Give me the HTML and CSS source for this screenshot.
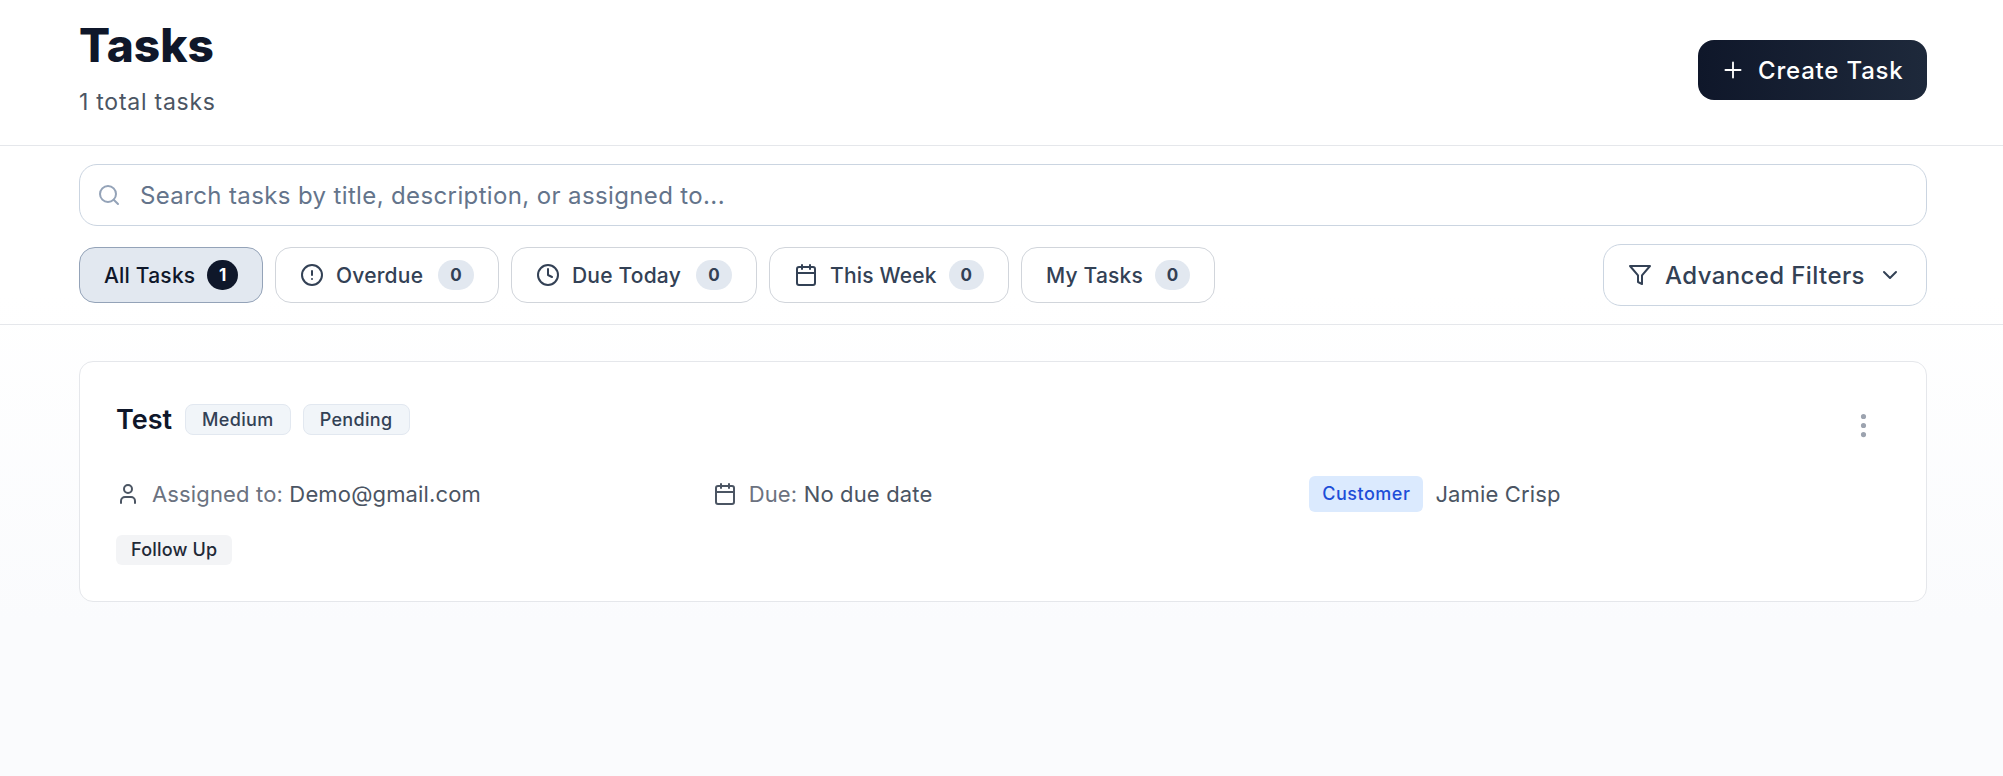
FILE: index.html
```html
<!DOCTYPE html>
<html>
<head>
	<title>Tasks</title>
	<meta charset="utf-8">
	<link rel="stylesheet" href="styles.css">
</head>
<body>
<div class="page-header">
	<div>
		<h1 class="page-title">Tasks</h1>
		<p class="page-sub">1 total tasks</p>
	</div>
	<button type="button" class="btn-create">
		<svg class="icon" viewBox="0 0 24 24"><path d="M5 12h14"/><path d="M12 5v14"/></svg>
		Create Task
	</button>
</div>

<div class="toolbar">
	<div class="search">
		<svg class="icon search-icon" viewBox="0 0 24 24"><circle cx="11" cy="11" r="8"/><path d="m21 21-4.3-4.3"/></svg>
		<input type="text" class="search-input" placeholder="Search tasks by title, description, or assigned to...">
	</div>
	<div class="filter-row">
		<div class="tabs">
			<button type="button" class="tab tab-active tab-all">All Tasks <span class="count">1</span></button>
			<button type="button" class="tab tab-overdue">
				<svg class="icon" viewBox="0 0 24 24"><circle cx="12" cy="12" r="10"/><path d="M12 8v4"/><path d="M12 16h.01"/></svg>
				Overdue <span class="count">0</span>
			</button>
			<button type="button" class="tab tab-today">
				<svg class="icon" viewBox="0 0 24 24"><circle cx="12" cy="12" r="10"/><path d="M12 6v6l4 2"/></svg>
				Due Today <span class="count">0</span>
			</button>
			<button type="button" class="tab tab-week">
				<svg class="icon" viewBox="0 0 24 24"><path d="M8 2v4"/><path d="M16 2v4"/><rect x="3" y="4" width="18" height="18" rx="2"/><path d="M3 10h18"/></svg>
				This Week <span class="count">0</span>
			</button>
			<button type="button" class="tab tab-mine">My Tasks <span class="count">0</span></button>
		</div>
		<button type="button" class="btn-filters">
			<svg class="icon" viewBox="0 0 24 24"><path d="M22 3H2l8 9.46V19l4 2v-8.54L22 3z"/></svg>
			Advanced Filters
			<svg class="icon" viewBox="0 0 24 24"><path d="m6 9 6 6 6-6"/></svg>
		</button>
	</div>
</div>

<div class="task-list">
	<div class="task-card">
		<div class="task-top">
			<div class="task-head">
				<span class="task-title">Test</span>
				<span class="badge">Medium</span>
				<span class="badge">Pending</span>
			</div>
			<button type="button" class="btn-more">
				<svg class="icon" viewBox="0 0 24 24"><circle cx="12" cy="5" r="1"/><circle cx="12" cy="12" r="1"/><circle cx="12" cy="19" r="1"/></svg>
			</button>
		</div>
		<div class="task-meta">
			<div class="meta-item">
				<svg class="icon" viewBox="0 0 24 24"><path d="M19 21v-2a4 4 0 0 0-4-4H9a4 4 0 0 0-4 4v2"/><circle cx="12" cy="7" r="4"/></svg>
				<span><span class="meta-label">Assigned to:</span> Demo@gmail.com</span>
			</div>
			<div class="meta-item">
				<svg class="icon" viewBox="0 0 24 24"><path d="M8 2v4"/><path d="M16 2v4"/><rect x="3" y="4" width="18" height="18" rx="2"/><path d="M3 10h18"/></svg>
				<span><span class="meta-label">Due:</span> No due date</span>
			</div>
			<div class="meta-item">
				<span class="customer-tag">Customer</span>
				<span>Jamie Crisp</span>
			</div>
		</div>
		<div class="task-tags">
			<span class="tag">Follow Up</span>
		</div>
	</div>
</div>
</body>
</html>
```

FILE: styles.css
```css
* {
	box-sizing: border-box;
}

body {
	margin: 0;
	min-height: 776px;
	font-family: "Inter", "Liberation Sans", sans-serif;
	background: linear-gradient(#ffffff 38%, #fafbfd 80%);
	color: #0f172a;
}

button {
	font-family: inherit;
	cursor: pointer;
}

.icon {
	width: 24px;
	height: 24px;
	fill: none;
	stroke: currentColor;
	stroke-width: 2;
	stroke-linecap: round;
	stroke-linejoin: round;
	flex: none;
}

.page-header {
	display: flex;
	justify-content: space-between;
	align-items: flex-start;
	height: 146px;
	padding: 20px 76px 0 79px;
	border-bottom: 1px solid #e5e7eb;
	background: #fff;
}

.page-title {
	margin: 0;
	font-size: 46px;
	line-height: 50px;
	font-weight: 800;
}

.page-sub {
	margin: 17px 0 0;
	font-size: 23px;
	line-height: 30px;
	letter-spacing: 0.75px;
	color: #4b5563;
}

.btn-create {
	display: flex;
	align-items: center;
	gap: 12px;
	width: 229px;
	height: 60px;
	margin-top: 20px;
	padding: 0 0 0 22px;
	border: 0;
	border-radius: 16px;
	background: linear-gradient(90deg, #0f172a, #1e293b);
	color: #fff;
	font-size: 24px;
	font-weight: 500;
	letter-spacing: 0.8px;
}

.btn-create .icon {
	width: 26px;
	height: 26px;
	stroke-width: 1.7;
}

.toolbar {
	padding: 18px 76px 18px 79px;
	border-bottom: 1px solid #e5e7eb;
}

.search {
	display: flex;
	align-items: center;
	gap: 19px;
	height: 62px;
	padding: 0 17px;
	border: 1px solid #cbd5e1;
	border-radius: 18px;
	background: #fff;
}

.search-icon {
	color: #94a3b8;
}

.search-input {
	flex: 1;
	padding: 0;
	border: 0;
	outline: 0;
	background: transparent;
	font-family: inherit;
	font-size: 24px;
	letter-spacing: 0.37px;
}

.search-input::placeholder {
	color: #64748b;
	opacity: 1;
}

.filter-row {
	display: flex;
	justify-content: space-between;
	align-items: center;
	margin-top: 18px;
}

.tabs {
	display: flex;
	gap: 12px;
}

.tab {
	display: flex;
	align-items: center;
	gap: 12px;
	height: 56px;
	padding: 0 24px;
	border: 1px solid #d1d5db;
	border-radius: 16px;
	background: #fff;
	color: #334155;
	font-size: 21px;
	font-weight: 500;
	letter-spacing: 0.2px;
	white-space: nowrap;
}

.tab-all { width: 184px; }
.tab-overdue { width: 224px; }
.tab-today { width: 246px; }
.tab-week { width: 240px; }
.tab-mine { width: 194px; }

.tab-active {
	background: #e2e8f0;
	border-color: #94a3b8;
	color: #0f172a;
}

.count {
	width: 36px;
	height: 30px;
	margin-left: auto;
	border-radius: 15px;
	background: #e2e8f0;
	font-size: 17px;
	font-weight: 700;
	line-height: 30px;
	text-align: center;
}

.tab-active .count {
	width: 31px;
	background: #0f172a;
	color: #fff;
}

.btn-filters {
	display: flex;
	align-items: center;
	gap: 13px;
	width: 324px;
	height: 62px;
	padding: 0 24px;
	border: 1px solid #cbd5e1;
	border-radius: 18px;
	background: #fff;
	color: #334155;
	font-size: 24px;
	font-weight: 500;
	letter-spacing: 0.4px;
	white-space: nowrap;
}

.task-list {
	padding: 36px 76px 0 79px;
}

.task-card {
	padding: 36px;
	border: 1px solid #e5e7eb;
	border-radius: 14px;
	background: #fff;
}

.task-top {
	display: flex;
	justify-content: space-between;
	align-items: flex-start;
}

.task-head {
	display: flex;
	align-items: center;
	gap: 12px;
	height: 42px;
}

.task-title {
	margin-right: 1px;
	font-size: 27px;
	font-weight: 600;
}

.badge {
	height: 31px;
	padding: 0 16px;
	border: 1px solid #e2e8f0;
	border-radius: 8px;
	background: #f1f5f9;
	color: #334155;
	font-size: 18px;
	font-weight: 500;
	letter-spacing: 0.35px;
	line-height: 29px;
}

.btn-more {
	display: flex;
	align-items: center;
	justify-content: center;
	width: 52px;
	height: 54px;
	margin-right: 1px;
	padding: 0;
	border: 0;
	background: none;
	color: #9ca3af;
}

.btn-more .icon {
	width: 31px;
	height: 31px;
}

.task-meta {
	display: grid;
	grid-template-columns: repeat(3, 1fr);
	gap: 16px;
	margin-top: 24px;
}

.meta-item {
	display: flex;
	align-items: center;
	gap: 12px;
	height: 36px;
	color: #4b5563;
	font-size: 22px;
	letter-spacing: 0.15px;
}

.meta-label {
	color: #6b7280;
}

.customer-tag {
	height: 36px;
	padding: 0 13px;
	border-radius: 6px;
	background: #dbeafe;
	color: #1d4ed8;
	font-size: 18px;
	font-weight: 500;
	letter-spacing: 0.5px;
	line-height: 36px;
}

.task-tags {
	margin-top: 23px;
}

.tag {
	display: inline-block;
	height: 30px;
	padding: 0 15px;
	border-radius: 6px;
	background: #f3f4f6;
	color: #1f2937;
	font-size: 18px;
	font-weight: 500;
	letter-spacing: 0.2px;
	line-height: 30px;
}
```
